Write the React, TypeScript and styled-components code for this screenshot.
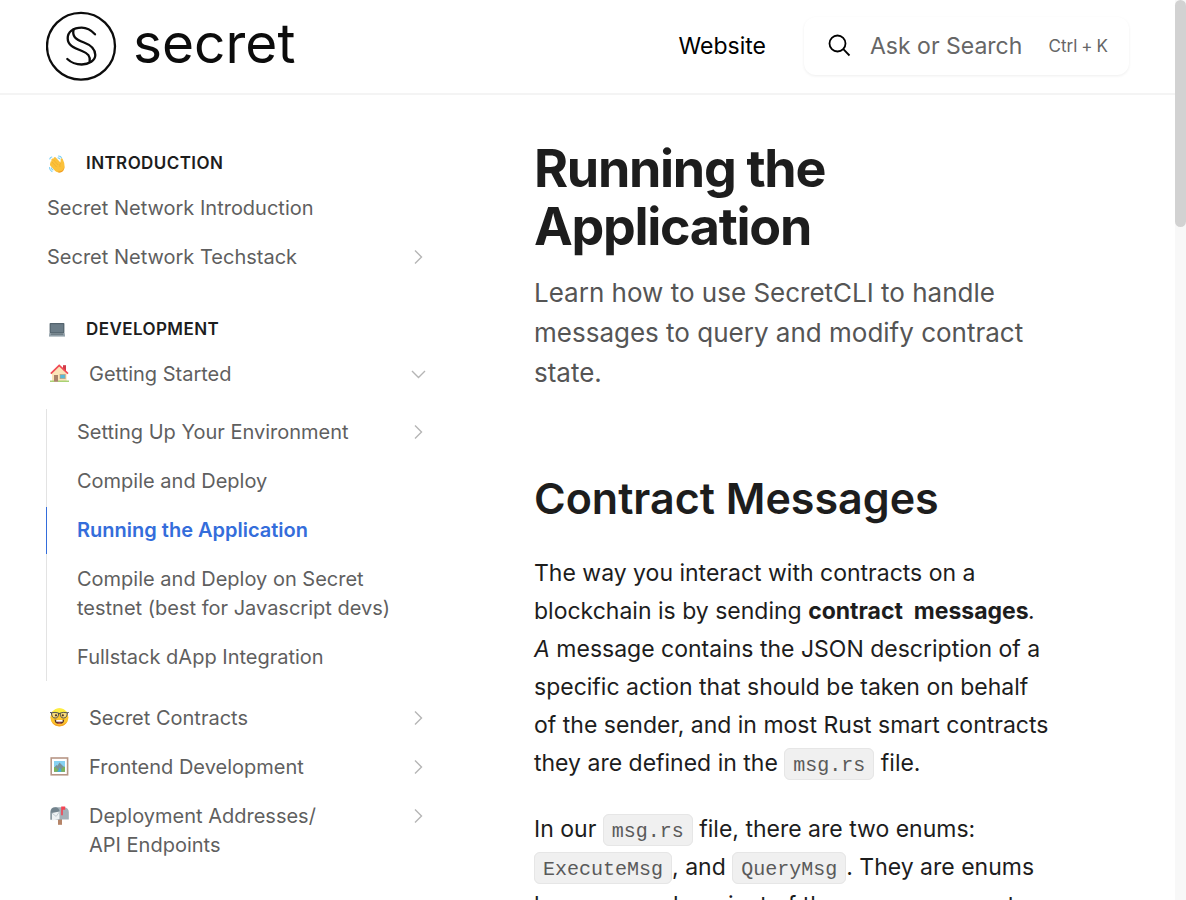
import React from "react";
import styled, { createGlobalStyle, css } from "styled-components";

const GlobalStyle = createGlobalStyle`
  *, *::before, *::after { box-sizing: border-box; }
  body {
    margin: 0;
    background: #fff;
    color: #1d1d1d;
    font-family: Inter, "Liberation Sans", sans-serif;
  }
  h1, h2, p, ul { margin: 0; padding: 0; }
  ul { list-style: none; }
  a { color: inherit; text-decoration: none; }
`;

const Shell = styled.div`
  display: flex;
  height: 100vh;
  overflow: hidden;
`;

const Page = styled.div`
  flex: 1;
  min-width: 0;
  overflow: hidden;
`;

const ScrollTrack = styled.div`
  flex: none;
  width: 11px;
  background: #f8f8f8;
`;

const ScrollThumb = styled.div`
  height: 227px;
  border-radius: 6px;
  background: #d2d2d2;
`;

const Header = styled.header`
  display: flex;
  align-items: center;
  height: 95px;
  padding: 0 46px 2px;
  border-bottom: 2px solid #f4f4f4;
`;

const Brand = styled.a`
  display: flex;
  align-items: center;
  gap: 15px;
  color: #0c0c0c;
`;

const Wordmark = styled.span`
  padding-bottom: 6px;
  font-size: 55px;
  line-height: 64px;
`;

const HeaderLink = styled.a`
  margin-left: auto;
  margin-right: 38px;
  font-size: 23px;
  line-height: 32px;
  color: #000;
`;

const SearchBox = styled.label`
  display: flex;
  align-items: center;
  width: 325px;
  height: 58px;
  padding: 0 21px 0 24px;
  border-radius: 12px;
  box-shadow: 0 1px 3px rgba(0, 0, 0, 0.07);
  color: #000;
`;

const SearchInput = styled.input`
  flex: 1;
  min-width: 0;
  margin-left: 19px;
  padding: 0;
  border: 0;
  outline: 0;
  background: transparent;
  font: inherit;
  font-size: 23px;
  line-height: 32px;
  color: #1d1d1d;
  &::placeholder { color: #666; opacity: 1; }
`;

const Shortcut = styled.kbd`
  display: flex;
  gap: 4px;
  font-family: inherit;
  font-size: 17px;
  line-height: 24px;
  color: #666;
`;

const Columns = styled.div`
  display: flex;
  gap: 104px;
  padding: 45px 46px 0;
`;

const Sidebar = styled.nav`
  flex: none;
  width: 384px;
  padding-top: 11px;
`;

const Section = styled.section`
  margin-bottom: 36px;
`;

const SectionTitle = styled.h2`
  display: flex;
  align-items: center;
  gap: 21px;
  margin-bottom: 9px;
  padding-left: 3px;
  font-size: 17px;
  font-weight: 600;
  line-height: 25px;
  letter-spacing: 0.025em;
  text-transform: uppercase;
`;

const NavList = styled.ul`
  display: flex;
  flex-direction: column;
  gap: 2px;
`;

const SubList = styled(NavList)`
  margin: 11px 0 12px;
  border-left: 1px solid #e3e3e3;
`;

const NavLink = styled.a<{ $nested?: boolean; $active?: boolean; $icon?: boolean }>`
  display: flex;
  align-items: flex-start;
  padding: 9px 4px 9px ${(p) => (p.$nested ? 30 : p.$icon ? 4 : 1)}px;
  font-size: 20px;
  line-height: 29px;
  color: #5f5f5f;
  ${(p) =>
    p.$active &&
    css`
      margin-left: -1px;
      padding-left: 30px;
      border-left: 1px solid #346ddb;
      font-weight: 600;
      color: #346ddb;
    `}
`;

const NavLabel = styled.span`
  flex: 1;
  min-width: 0;
`;

const IconSlot = styled.span`
  display: flex;
  align-items: center;
  flex: none;
  width: 39px;
  height: 27px;
`;

const ChevronSlot = styled.span`
  display: flex;
  align-items: center;
  flex: none;
  height: 27px;
  color: #b5b5b5;
`;

const Article = styled.main`
  flex: 1;
  min-width: 0;
  padding-right: 74px;
`;

const Title = styled.h1`
  font-size: 52px;
  font-weight: 700;
  line-height: 58px;
  letter-spacing: -0.025em;
`;

const Lead = styled.p`
  margin-top: 17px;
  font-size: 26px;
  line-height: 40px;
  color: #555;
`;

const Heading = styled.h2`
  margin: 78px 0 29px;
  font-size: 43px;
  font-weight: 600;
  line-height: 54px;
`;

const Paragraph = styled.p`
  margin-bottom: 28px;
  font-size: 23px;
  line-height: 38px;
`;

const Code = styled.code`
  padding: 5px 8px 2px;
  border: 1px solid #e6e6e6;
  border-radius: 6px;
  background: #f0f0f0;
  font-family: "Liberation Mono", monospace;
  font-size: 20px;
  line-height: 28px;
  color: #5a5a5a;
`;

const Logo = () => (
  <svg width="72" height="70" viewBox="0 0 72 70" fill="none" stroke="currentColor" strokeLinecap="round" aria-hidden="true">
    <ellipse cx="35" cy="35.2" rx="34" ry="33.4" strokeWidth="2.3" />
    <g strokeWidth="2.3">
      <path d="M49 23.3 C44 18 40 16.7 35.7 16.7 C27 16.7 21.7 21 21.7 27.3 C21.7 34 27 36.5 36 40 C42 42.5 44.5 45 43.7 50.7" />
      <path d="M27.7 18.3 C26 25 29 28.5 38 31.5 C46 34.5 49.3 38 49.3 44 C49.3 49.5 43 53.5 35.7 53.5 C29 53.5 25 51.5 21.3 48" />
    </g>
  </svg>
);

const SearchIcon = () => (
  <svg width="23" height="24" viewBox="0 0 23 24" fill="none" stroke="currentColor" strokeWidth="1.8" aria-hidden="true">
    <circle cx="9.5" cy="9.5" r="8" />
    <path d="M15.3 15.2 L21.5 21.5" />
  </svg>
);

const Chevron = ({ open }: { open?: boolean }) => (
  <svg width="16" height="16" viewBox="0 0 16 16" fill="none" stroke="currentColor" strokeWidth="1.4" aria-hidden="true">
    <path d={open ? "M2 5 L8.5 11.5 L15 5" : "M5 1.5 L11.5 8 L5 14.5"} />
  </svg>
);

const Wave = () => (
  <svg width="16" height="18" viewBox="0 0 16 18" aria-hidden="true">
    <g fill="none" stroke="#7fd0f2" strokeWidth="1.1" strokeLinecap="round">
      <path d="M9.5 1 Q11.8 1 12.6 3 M9 2.9 Q10.4 3 11 4 M.5 12.5 Q.7 15.3 3 16.6 M2.4 12.8 Q2.6 14.2 4 15 M.8 4 Q1.2 2.4 2.8 2" />
    </g>
    <path d="M1.4 8 Q1 6.4 2.4 6.2 L2.4 4.4 Q3 3.2 4.2 3.8 L5 2.4 Q6.2 1.6 7 2.8 L11.4 7.4 L11.8 4 Q12.4 2.6 13.6 3.8 Q15.6 8 15.6 11.4 C15.6 14.6 13.6 17.4 10.4 17.4 C8 17.4 6.2 16.2 4.8 14.4 L1.2 10.4 Q.6 8.8 1.4 8Z" fill="#fbc13a" />
    <path d="M3 7 L7.5 12 M4.5 4.8 L9.2 10 M12 7.8 Q10.2 9.5 11 12" fill="none" stroke="#eda72c" strokeWidth=".6" />
    <path d="M15.5 11 C15 15 12.5 16.8 8.4 16.7 Q12 19 14.4 15.3 Q15.6 13.4 15.5 11Z" fill="#f29a25" />
  </svg>
);

const Laptop = () => (
  <svg width="16" height="16" viewBox="0 0 16 16" aria-hidden="true">
    <rect x=".6" y="1" width="14.8" height="10.4" rx=".8" fill="#54646e" />
    <rect x="1.8" y="2.2" width="12.4" height="8" fill="#6b7c87" />
    <path d="M.4 11 H15.6 L16 14 H0Z" fill="#8b9aa3" />
    <path d="M2.2 11.6 H13.8 L14.2 12.7 H1.8Z" fill="#66747c" />
    <path d="M0 13.8 H16 V14.8 H0Z" fill="#aebac0" />
  </svg>
);

const House = () => (
  <svg width="19" height="19" viewBox="0 0 19 19" aria-hidden="true">
    <rect x="13" y="1.2" width="3" height="6" fill="#d23b48" />
    <path d="M2 9 L9.2 2 L16.6 9 V17.5 H2Z" fill="#fbe3b8" />
    <path d="M.8 9.6 L9.2 1.4 L18 9.6" fill="none" stroke="#f04a55" strokeWidth="1.7" />
    <rect x="4" y="11" width="4" height="6.8" fill="#a9826a" />
    <rect x="10" y="10.5" width="5.2" height="4.2" fill="#58b8d8" stroke="#c69b72" strokeWidth=".6" />
    <path d="M0 17.2 H4 M8 17.2 H19" stroke="#a9d274" strokeWidth="1.5" />
  </svg>
);

const Nerd = () => (
  <svg width="19" height="19" viewBox="0 0 19 19" aria-hidden="true">
    <circle cx="9.4" cy="9.5" r="9" fill="#fcc62e" />
    <path d="M1.5 5 A9 9 0 0 1 17.4 5Z" fill="#fdee40" />
    <path d="M1.2 13 A9 9 0 0 0 17.6 13 Q14 17 9.4 17 Q4.8 17 1.2 13Z" fill="#f4a228" />
    <g fill="#f7dc7c" stroke="#3e4350" strokeWidth=".9">
      <path d="M1.5 4.8 Q5 3.8 8.6 5 Q8.8 10 5.2 10 Q1.6 10 1.5 4.8Z" />
      <path d="M10.2 5 Q13.8 3.8 17.3 4.8 Q17.2 10 13.6 10 Q10 10 10.2 5Z" />
      <path d="M8.6 5.4 H10.2 M0 4.4 L2 5 M17 5 L18.8 4.4" />
    </g>
    <circle cx="6" cy="7.3" r="1.1" fill="#4a3020" />
    <circle cx="12.8" cy="7.3" r="1.1" fill="#4a3020" />
    <path d="M4.6 11.4 Q9.4 12.6 14.2 11.4 Q14 16 9.4 16 Q4.8 16 4.6 11.4Z" fill="#5a3328" />
    <path d="M6.2 12 H12.6 V13.7 H6.2Z" fill="#fff" />
    <path d="M7 15 Q9.4 13.8 11.8 15 Q9.4 16.6 7 15Z" fill="#f25c63" />
  </svg>
);

const Frame = () => (
  <svg width="19" height="19" viewBox="0 0 19 19" aria-hidden="true">
    <rect x="1.2" y="1" width="16.4" height="16.8" fill="#fff" stroke="#b79686" strokeWidth="1.6" />
    <rect x="4" y="4" width="11" height="10.8" fill="#86d1f2" />
    <path d="M4 11 L6.4 8 L7.5 8.8 L9.5 5.6 L13 9 L15 10.6 V14.8 H4Z" fill="#7b9298" />
    <path d="M4 10 Q7 10.5 9 14.8 H4Z M15 9.5 Q11.5 10.6 10.5 14.8 H15Z" fill="#7cb45a" />
    <path d="M8.4 10 Q11 11 7 14.8 H11.2 Q12 12 8.4 10Z" fill="#42aee0" />
  </svg>
);

const Mailbox = () => (
  <svg width="19" height="19" viewBox="0 0 19 19" aria-hidden="true">
    <rect x="8" y="13" width="4" height="5.8" fill="#b58468" />
    <path d="M4.5 1.2 H14 Q18.8 1.6 18.8 6.4 V13.4 H9Z" fill="#a3b0b8" />
    <path d="M.4 13.8 V6 Q.6 1.2 5 1.2 Q9.4 1.2 9.6 6 V13.8Z" fill="#72838d" />
    <path d="M1.8 7 L9.6 5.6 V13.2 L1.8 14.4Z" fill="#eef2f4" />
    <path d="M1.8 7 L6.2 10.4 L9.6 5.6" fill="none" stroke="#b6c1c7" strokeWidth=".8" />
    <path d="M11.2 9.2 V.6 H15.2 V3.8 H12.8 V9.2Z" fill="#f44352" />
  </svg>
);

type ItemProps = {
  label: React.ReactNode;
  icon?: React.ReactNode;
  chevron?: "right" | "down";
  nested?: boolean;
  active?: boolean;
  children?: React.ReactNode;
};

const NavItem = ({ label, icon, chevron, nested, active, children }: ItemProps) => (
  <li>
    <NavLink href="#" $nested={nested} $active={active} $icon={!!icon} aria-current={active ? "page" : undefined}>
      {icon && <IconSlot>{icon}</IconSlot>}
      <NavLabel>{label}</NavLabel>
      {chevron && (
        <ChevronSlot>
          <Chevron open={chevron === "down"} />
        </ChevronSlot>
      )}
    </NavLink>
    {children}
  </li>
);

export default function App() {
  return (
    <>
      <GlobalStyle />
      <Shell>
        <Page>
          <Header>
            <Brand href="#">
              <Logo />
              <Wordmark>secret</Wordmark>
            </Brand>
            <HeaderLink href="#">Website</HeaderLink>
            <SearchBox>
              <SearchIcon />
              <SearchInput type="text" placeholder="Ask or Search" aria-label="Ask or Search" />
              <Shortcut>
                <span>Ctrl</span>
                <span>+</span>
                <span>K</span>
              </Shortcut>
            </SearchBox>
          </Header>
          <Columns>
            <Sidebar aria-label="Documentation">
              <Section>
                <SectionTitle><Wave />Introduction</SectionTitle>
                <NavList>
                  <NavItem label="Secret Network Introduction" />
                  <NavItem label="Secret Network Techstack" chevron="right" />
                </NavList>
              </Section>
              <Section>
                <SectionTitle><Laptop />Development</SectionTitle>
                <NavList>
                  <NavItem label="Getting Started" icon={<House />} chevron="down">
                    <SubList>
                      <NavItem nested label="Setting Up Your Environment" chevron="right" />
                      <NavItem nested label="Compile and Deploy" />
                      <NavItem nested active label="Running the Application" />
                      <NavItem nested label="Compile and Deploy on Secret testnet (best for Javascript devs)" />
                      <NavItem nested label="Fullstack dApp Integration" />
                    </SubList>
                  </NavItem>
                  <NavItem label="Secret Contracts" icon={<Nerd />} chevron="right" />
                  <NavItem label="Frontend Development" icon={<Frame />} chevron="right" />
                  <NavItem
                    label={<>Deployment Addresses/<wbr />API&nbsp;Endpoints</>}
                    icon={<Mailbox />}
                    chevron="right"
                  />
                </NavList>
              </Section>
            </Sidebar>
            <Article>
              <Title>Running the Application</Title>
              <Lead>Learn how to use SecretCLI to handle messages to query and modify contract state.</Lead>
              <Heading>Contract Messages</Heading>
              <Paragraph>
                The way you interact with contracts on a blockchain is by sending{" "}
                <strong>contract&nbsp; messages</strong><em>. A</em> message contains the JSON description of a
                specific action that should be taken on behalf of the sender, and in most Rust smart contracts they
                are defined in the <Code>msg.rs</Code> file.
              </Paragraph>
              <Paragraph>
                In our <Code>msg.rs</Code> file, there are two enums: <Code>ExecuteMsg</Code>, and{" "}
                <Code>QueryMsg</Code>. They are enums because each variant of the enum represents a different message.
              </Paragraph>
            </Article>
          </Columns>
        </Page>
        <ScrollTrack>
          <ScrollThumb />
        </ScrollTrack>
      </Shell>
    </>
  );
}
